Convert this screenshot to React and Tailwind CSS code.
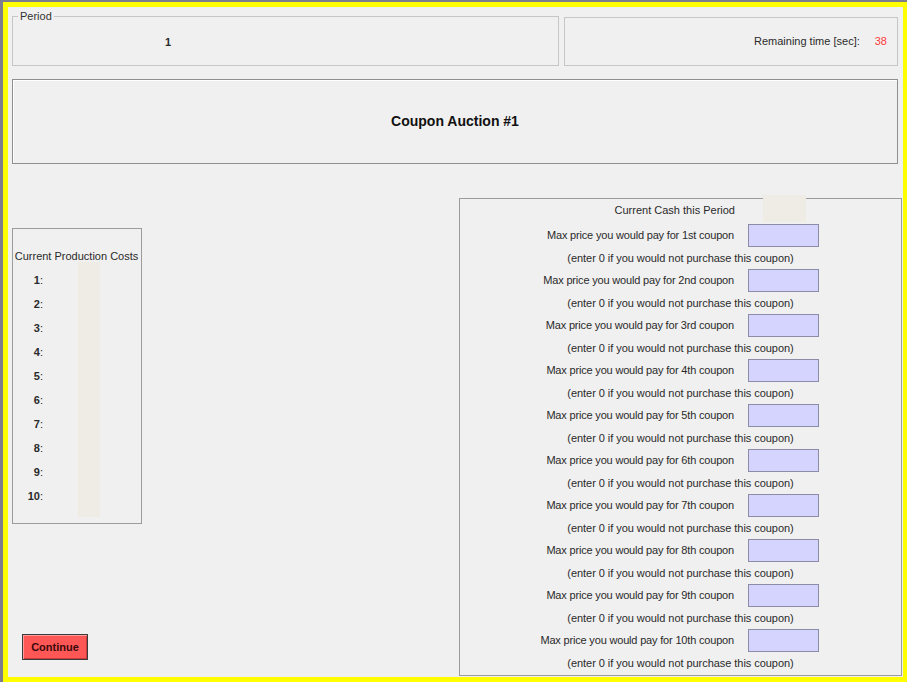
const ordinals = ["1st", "2nd", "3rd", "4th", "5th", "6th", "7th", "8th", "9th", "10th"];

function CouponBid({ ordinal }) {
  return (
    <div className="flex flex-col">
      <div className="flex items-center h-[23px]">
        <div className="w-[274px] text-right leading-[13px] tracking-[-0.18px]">
          Max price you would pay for {ordinal} coupon
        </div>
        <input
          type="text"
          className="ml-[14px] w-[71px] h-[23px] bg-[#d4d4ff] border border-[#8c8ca6] outline-none px-1 text-[11px]"
        />
      </div>
      <div className="h-[22px] flex items-center justify-center w-[441px] tracking-[-0.05px]">
        (enter 0 if you would not purchase this coupon)
      </div>
    </div>
  );
}

export default function App() {
  return (
    <div
      className="w-[907px] h-[682px] bg-[#7d7d8d] pt-[2px] pl-[3px] text-[11px] text-[#2a2a2a]"
      style={{ fontFamily: '"Liberation Sans", Arial, sans-serif' }}
    >
      <div className="w-[904px] h-[680px] bg-[#ffff00] pt-[5px] pl-[5px] pr-[4px] pb-[5px]">
        <div className="w-full h-full bg-[#f0f0f0] flex flex-col pl-[4px] pr-[1px]">
          {/* header: period and timer */}
          <div className="flex gap-[5px] mr-[4px] mt-[3px]">
            <fieldset className="w-[547px] h-[56px] border border-[#c6c6c6] rounded-none">
              <legend className="ml-[5px] px-[2px] leading-[13px] text-[#333]">Period</legend>
              <div className="pl-[152px] pt-[13px] font-bold leading-[13px]">1</div>
            </fieldset>
            <div className="flex-1 mt-[7px] h-[49px] border border-[#c6c6c6] flex items-center justify-end pr-[10px]">
              <span>Remaining time [sec]:</span>
              <span className="ml-[15px] text-[#ff3b3b]">38</span>
            </div>
          </div>

          {/* auction title */}
          <div className="mr-[4px] mt-[13px] h-[85px] border border-[#8f8f8f] shadow-[inset_1px_1px_0_#ffffff] flex items-center justify-center">
            <span className="text-[14px] font-bold text-[#111] -mt-[1px]">Coupon Auction #1</span>
          </div>

          {/* lower area */}
          <div className="flex justify-between flex-1">
            <div className="flex flex-col">
              <div className="mt-[64px] w-[130px] h-[296px] border border-[#9c9c9c] flex flex-col">
                <div className="pt-[20px] text-center leading-[14px] whitespace-nowrap -ml-[1px]">
                  Current Production Costs
                </div>
                <div className="flex -mt-[1px]">
                  <div className="w-[30px] pt-[6px] flex flex-col items-end">
                    {[1, 2, 3, 4, 5, 6, 7, 8, 9, 10].map((n) => (
                      <div key={n} className="h-[24px] flex items-center">
                        <span className="font-bold">{n}</span>:
                      </div>
                    ))}
                  </div>
                  <div className="ml-[35px] w-[22px] h-[255px] bg-[#eeece4]" />
                </div>
              </div>
              <button className="mt-[110px] ml-[10px] w-[66px] h-[26px] bg-[#ff5656] border border-[#3c3c3c] shadow-[inset_1px_1px_0_#ff9a9a,inset_-1px_-1px_0_#c83a3a] font-bold text-[#3a0a0a] leading-[13px]">
                Continue
              </button>
            </div>

            <div className="mt-[34px] mb-[1px] w-[443px] border border-[#9c9c9c] flex flex-col">
              <div className="flex h-[27px] -mt-[4px]">
                <div className="w-[275px] text-right pt-[9px] leading-[13px]">Current Cash this Period</div>
                <div className="ml-[28px] w-[43px] h-[27px] bg-[#eeece4]" />
              </div>
              <div className="mt-[2px] flex flex-col">
                {ordinals.map((o) => (
                  <CouponBid key={o} ordinal={o} />
                ))}
              </div>
            </div>
          </div>
        </div>
      </div>
    </div>
  );
}
